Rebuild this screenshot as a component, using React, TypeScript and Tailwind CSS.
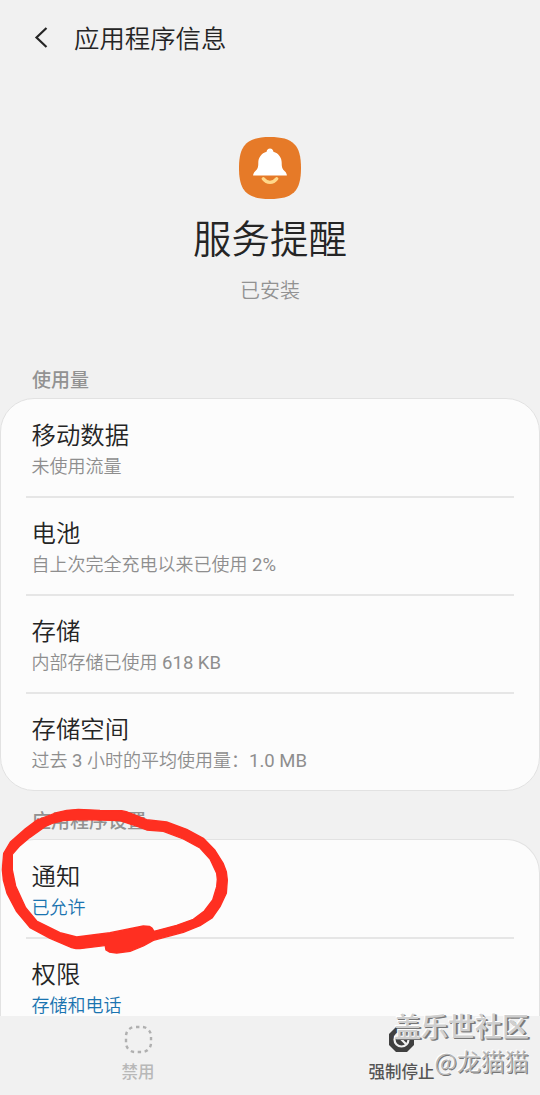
import React from "react";

const usage = [
  { title: "移动数据", detail: "未使用流量" },
  { title: "电池", detail: "自上次完全充电以来已使用 2%" },
  { title: "存储", detail: "内部存储已使用 618 KB" },
  { title: "存储空间", detail: "过去 3 小时的平均使用量：1.0 MB" },
];

const settings = [
  { title: "通知", detail: "已允许" },
  { title: "权限", detail: "存储和电话" },
];

type RowProps = {
  title: string;
  detail: string;
  last?: boolean;
  link?: boolean;
};

const Row = ({ title, detail, last, link }: RowProps) => (
  <div
    className={`mx-[25px] h-[98px] px-[5.5px] pt-[19px] ${last ? "" : "border-b-2 border-[#e6e6e6]"}`}
  >
    <div className="text-[24.4px] leading-[34px] text-[#252525]">{title}</div>
    <div
      className={`mt-px text-[18px] leading-[26px] ${link ? "text-[#1a74b0]" : "text-[#8e8e8e]"}`}
    >
      {/* latin runs are a little heavier than the chinese text */}
      {detail.split(/([ -~]+)/).map((part, i) =>
        i % 2 ? (
          <span key={i} className="text-[18.5px] font-normal leading-[20px]">
            {part}
          </span>
        ) : (
          part
        )
      )}
    </div>
  </div>
);

const RedCircle = () => (
  <svg
    className="absolute left-0 top-[790px] h-[170px] w-[250px]"
    viewBox="0 0 750 510"
  >
    <path
      d="M7 240 11 190 31 156 76 116 111 90 170 68 200 61 235 58 300 61 365 62 382 66 400 73 440 89 500 96 560 118 610 145 645 181 670 221 679 245 682 270 679 310 660 350 636 384 600 407 550 427 460 451 430 468 390 484 350 489 328 486 318 480 316 470 320 466 240 476 228 476 215 473 150 445 90 413 50 365 21 310 10 270Z
         M37 193 60 167 90 142 135 110 160 99 190 92 235 89 300 90 360 92 400 105 440 120 490 124 550 147 600 174 630 207 650 250 652 268 650 290 638 330 613 363 580 388 530 406 462 424 456 414 448 409 430 408 330 428 230 441 180 428 110 393 77 353 47 288 37 240Z"
      fill="#ff2f21"
      stroke="#ff2f21"
      strokeWidth="4"
      strokeLinejoin="round"
      fillRule="evenodd"
    />
  </svg>
);

const BellIcon = () => (
  <svg className="h-[62px] w-[62px]" viewBox="0 0 62 62">
    <path
      d="M31 0C54 0 62 8 62 31S54 62 31 62 0 54 0 31 8 0 31 0Z"
      fill="#e67a28"
    />
    <path
      d="M31 11.500c1.900 0 3.300 1.300 3.400 3.200 5.200 1.500 8.300 5.800 8.300 11.100 0 4.500.6 6.300 3.300 8.600 1.100 1 1.900 2.600 1.900 4.200H14.100c0-1.600.8-3.200 1.900-4.200 2.700-2.300 3.300-4.100 3.300-8.600 0-5.300 3.100-9.600 8.300-11.100.1-1.900 1.500-3.200 3.400-3.200Z"
      fill="#fff"
    />
    <path
      d="M24.300 41.800c3.600 4.700 9.800 4.700 13.400 0"
      fill="none"
      stroke="#ffd88a"
      strokeWidth="3.400"
      strokeLinecap="round"
    />
  </svg>
);

const App = () => {
  return (
    <div className="relative flex h-[1095px] w-[540px] flex-col overflow-hidden bg-[#f1f1f1] font-['Roboto','Noto_Sans_CJK_SC',sans-serif] font-[350]">
      <header className="flex h-[76px] shrink-0 items-center pl-[34px]">
        <svg
          className="h-[22px] w-[15px]"
          viewBox="0 0 15 22"
          fill="none"
          stroke="#252525"
          strokeWidth="2.2"
        >
          <path d="M12.500 1 2.500 10.500l10 9.500" />
        </svg>
        <h1 className="ml-[25px] pt-[2px] text-[25.4px] font-[350] text-[#252525]">
          应用程序信息
        </h1>
      </header>

      <section className="flex h-[285px] shrink-0 flex-col items-center pt-[61px]">
        <BellIcon />
        <h2 className="mt-[13px] text-[38.5px] font-[350] leading-[56px] text-[#252525]">
          服务提醒
        </h2>
        <p className="mt-[9px] text-[20px] leading-[28px] text-[#929292]">
          已安装
        </p>
      </section>

      <h3 className="h-[37px] shrink-0 pl-[32px] pt-[6px] text-[19px] font-medium leading-[28px] text-[#929292]">
        使用量
      </h3>
      <div className="h-[393px] shrink-0 rounded-[34px] border border-[#e2e2e2] bg-[#fcfcfc] pt-px">
        {usage.map((row, i) => (
          <Row key={row.title} {...row} last={i === usage.length - 1} />
        ))}
      </div>

      <h3 className="h-[48px] shrink-0 pl-[32px] pt-[17px] text-[19px] font-medium leading-[28px] text-[#929292]">
        应用程序设置
      </h3>
      <div className="h-[177px] shrink-0 overflow-hidden rounded-t-[34px] border border-b-0 border-[#e2e2e2] bg-[#fcfcfc] pt-px">
        {settings.map((row) => (
          <Row key={row.title} {...row} link />
        ))}
      </div>

      <footer className="flex h-[79px] shrink-0 bg-[#f1f1f1] pl-[5px] text-[16.5px] font-medium">
        <div className="flex w-[266px] flex-col items-center pt-[9px] text-[#b8b8b8]">
          <svg className="h-[29px] w-[29px]" viewBox="0 0 29 29">
            <rect
              x="2"
              y="2"
              width="25"
              height="25"
              rx="9"
              fill="none"
              stroke="#b0b0b0"
              strokeWidth="2.400"
              strokeDasharray="3.400 3.600"
              strokeDashoffset="-1"
            />
          </svg>
          <span className="mt-[7px] leading-[24px]">禁用</span>
        </div>
        <div className="flex w-[261px] flex-col items-center pt-[9px] text-[#555]">
          <svg className="h-[29px] w-[29px]" viewBox="0 0 29 29">
            <path d="M9 2h11l7 7v11l-7 7H9l-7-7V9Z" fill="#404040" />
            <circle
              cx="14.5"
              cy="14.5"
              r="7"
              fill="none"
              stroke="#f1f1f1"
              strokeWidth="2.200"
            />
            <path d="m10 10 9 9" stroke="#f1f1f1" strokeWidth="2.200" />
          </svg>
          <span className="mt-[7px] leading-[24px]">强制停止</span>
        </div>
      </footer>

      <RedCircle />

      <div className="absolute right-[11px] top-[1008px] flex flex-col items-end font-['Noto_Sans_CJK_SC',sans-serif] text-[#cfcfcf]">
        <span className="text-[27px] font-medium leading-[36px] [text-shadow:-1px_-1px_0_#fff,1px_1px_0_#777,2px_1px_0_#858585]">
          盖乐世社区
        </span>
        <span className="text-[24px] leading-[34px] text-[#b5b5b5] [text-shadow:-1px_-1px_0_#fff,1px_1px_0_#777]">
          @龙猫猫
        </span>
      </div>
    </div>
  );
};

export default App;
